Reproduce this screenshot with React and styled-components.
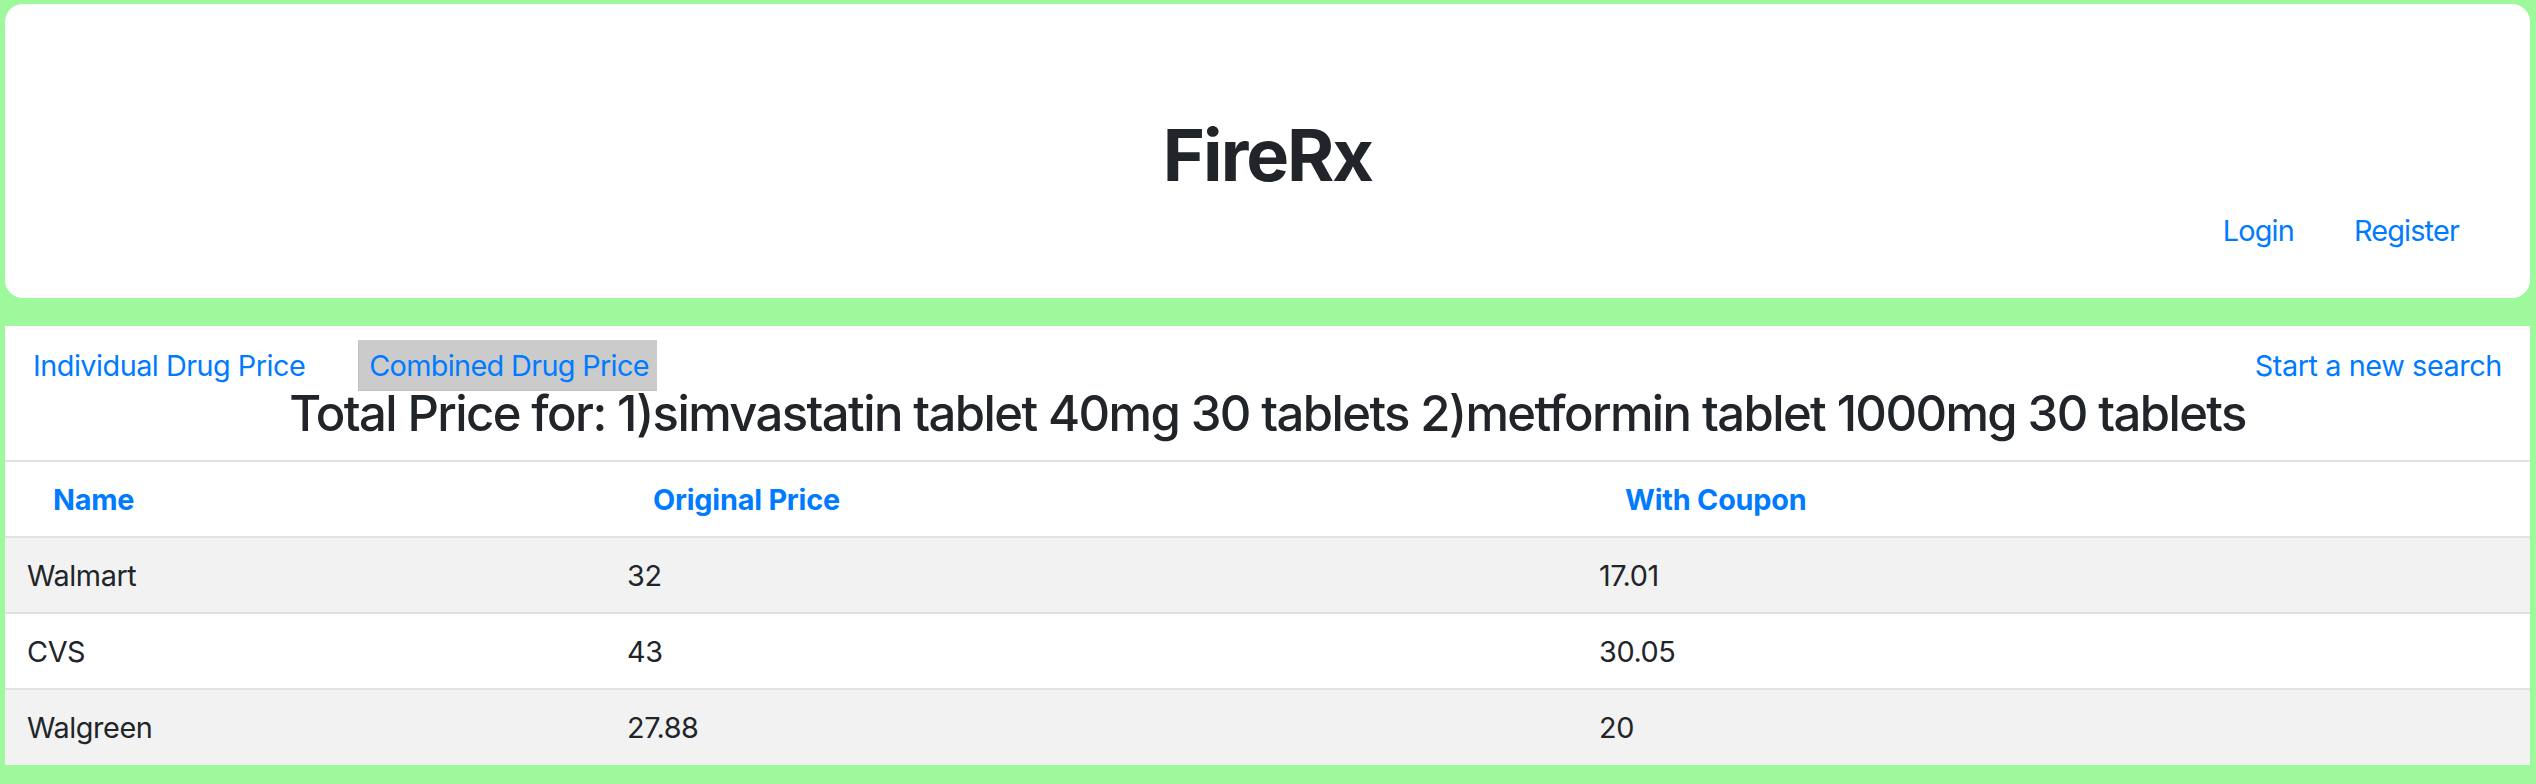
import React from "react";
import styled, { createGlobalStyle } from "styled-components";

const GlobalStyle = createGlobalStyle`
  html, body {
    margin: 0;
    padding: 0;
    background: rgb(157, 249, 155);
    font-family: Inter, "Noto Sans", "Liberation Sans", sans-serif;
    color: #212529;
  }
  * { box-sizing: border-box; }
`;

const Page = styled.div`
  min-height: 100vh;
  padding: 4px 6px 21px 5px;
  display: flex;
  flex-direction: column;
  gap: 28px;
`;

const HeaderCard = styled.header`
  background: #fff;
  border-radius: 18px;
  padding: 108px 71px 45px 71px;
  display: flex;
  flex-direction: column;
`;

const Brand = styled.h1`
  margin: 0;
  text-align: center;
  font-size: 72px;
  font-weight: 700;
  line-height: 86.4px;
  letter-spacing: -2px;
  color: #212529;
`;

const NavRow = styled.nav`
  display: flex;
  justify-content: flex-end;
  margin-top: 11px;
`;

const NavLink = styled.a`
  color: #007bff;
  font-size: 28.8px;
  line-height: 43.2px;
  padding: 0 30px;
  text-decoration: none;
  letter-spacing: -0.8px;
  cursor: pointer;
  &:last-child { padding-right: 0; }
`;

const Panel = styled.section`
  background: #fff;
  padding-top: 14px;
`;

const TabRow = styled.div`
  display: flex;
  align-items: center;
  padding: 0 28px 0 17px;
  gap: 45px;
`;

const Tab = styled.a`
  color: #007bff;
  font-size: 28.8px;
  line-height: 43.2px;
  padding: 3px 7px 3px 10px;
  border: 1px solid ${(p) => (p.$active ? "#cdbfb5" : "transparent")};
  border-top-color: ${(p) => (p.$active ? "#cbcbcb" : "transparent")};
  border-right-color: ${(p) => (p.$active ? "#cbcbcb" : "transparent")};
  background: ${(p) => (p.$active ? "#cbcbcb" : "transparent")};
  letter-spacing: ${(p) => (p.$active ? "-0.65px" : "-0.5px")};
  text-decoration: none;
  cursor: pointer;
`;

const SearchLink = styled.a`
  margin-left: auto;
  color: #007bff;
  font-size: 28.8px;
  line-height: 43.2px;
  letter-spacing: -0.4px;
  text-decoration: none;
  cursor: pointer;
`;

const Heading = styled.h3`
  margin: -7px 0 16px;
  text-align: center;
  font-size: 49px;
  font-weight: 500;
  line-height: 60.5px;
  letter-spacing: -1.6px;
  color: #212529;
`;

const Table = styled.table`
  width: 100%;
  border-collapse: collapse;
  font-size: 28.8px;
  letter-spacing: -0.4px;
`;

const HeadCell = styled.th`
  text-align: left;
  height: 76px;
  padding: 0 0 0 48px;
  border-top: 2px solid #dee2e6;
  border-bottom: 2px solid #dee2e6;
  color: #007bff;
  font-weight: 700;
  letter-spacing: -0.2px;
  vertical-align: middle;
`;

const Row = styled.tr`
  background: ${(p) => (p.$striped ? "#f2f2f2" : "#fff")};
`;

const Cell = styled.td`
  height: 76px;
  padding: 0 0 0 22px;
  border-top: 2px solid #dee2e6;
  vertical-align: middle;
  color: #212529;
`;

const rows = [
  { name: "Walmart", original: "32", coupon: "17.01" },
  { name: "CVS", original: "43", coupon: "30.05" },
  { name: "Walgreen", original: "27.88", coupon: "20" },
];

export default function App() {
  return (
    <>
      <GlobalStyle />
      <Page>
        <HeaderCard>
          <Brand>FireRx</Brand>
          <NavRow>
            <NavLink>Login</NavLink>
            <NavLink>Register</NavLink>
          </NavRow>
        </HeaderCard>
        <Panel>
          <TabRow>
            <Tab>Individual Drug Price</Tab>
            <Tab $active>Combined Drug Price</Tab>
            <SearchLink>Start a new search</SearchLink>
          </TabRow>
          <Heading>
            Total Price for: 1)simvastatin tablet 40mg 30 tablets 2)metformin tablet 1000mg 30 tablets
          </Heading>
          <Table>
            <colgroup>
              <col style={{ width: 600 }} />
              <col style={{ width: 972 }} />
              <col />
            </colgroup>
            <thead>
              <tr>
                <HeadCell>Name</HeadCell>
                <HeadCell>Original Price</HeadCell>
                <HeadCell>With Coupon</HeadCell>
              </tr>
            </thead>
            <tbody>
              {rows.map((r, i) => (
                <Row key={r.name} $striped={i % 2 === 0}>
                  <Cell>{r.name}</Cell>
                  <Cell>{r.original}</Cell>
                  <Cell>{r.coupon}</Cell>
                </Row>
              ))}
            </tbody>
          </Table>
        </Panel>
      </Page>
    </>
  );
}
